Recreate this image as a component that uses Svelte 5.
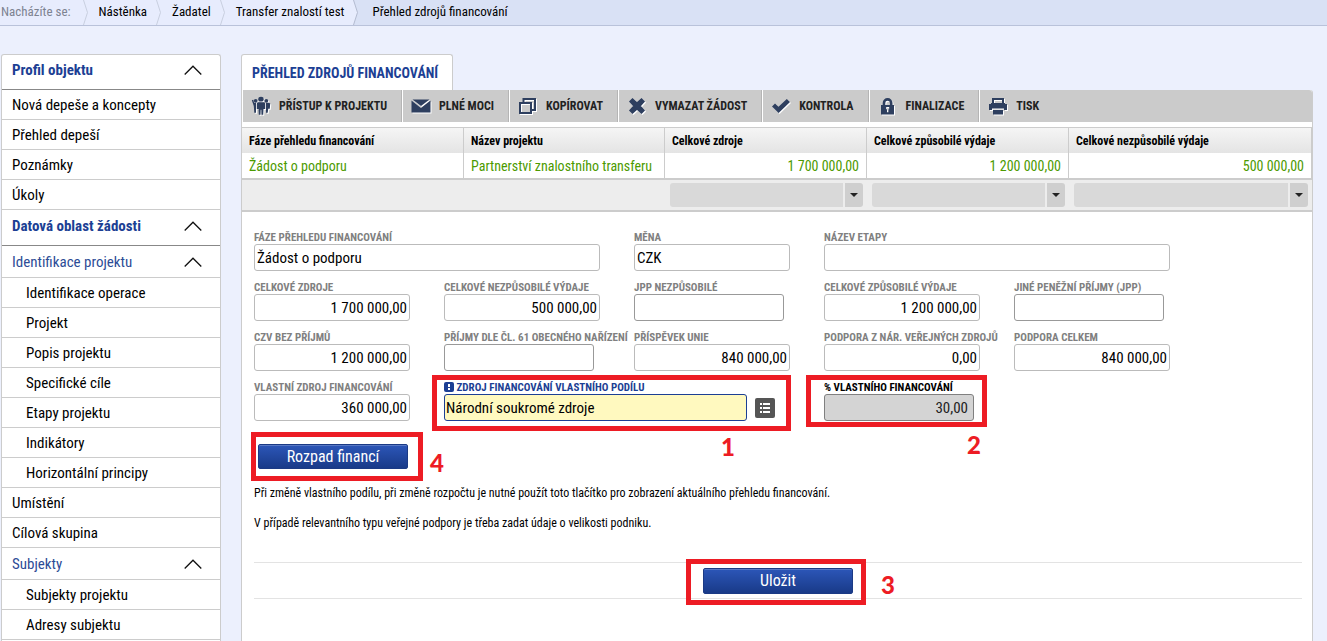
<script lang="ts">
  type Field = {
    id: string;
    label: string;
    value: string;
    span?: number;
    size: 'full' | 'short' | 'lookup';
    numeric?: boolean;
    kind?: 'required' | 'computed';
    mark?: 'share' | 'percent';
  };

  const crumbs = ['Nástěnka', 'Žadatel', 'Transfer znalostí test'];

  const menu = [
    { text: 'Profil objektu', type: 'head' },
    { text: 'Nová depeše a koncepty', type: 'item' },
    { text: 'Přehled depeší', type: 'item' },
    { text: 'Poznámky', type: 'item' },
    { text: 'Úkoly', type: 'item' },
    { text: 'Datová oblast žádosti', type: 'head' },
    { text: 'Identifikace projektu', type: 'group' },
    { text: 'Identifikace operace', type: 'sub' },
    { text: 'Projekt', type: 'sub' },
    { text: 'Popis projektu', type: 'sub' },
    { text: 'Specifické cíle', type: 'sub' },
    { text: 'Etapy projektu', type: 'sub' },
    { text: 'Indikátory', type: 'sub' },
    { text: 'Horizontální principy', type: 'sub' },
    { text: 'Umístění', type: 'item' },
    { text: 'Cílová skupina', type: 'item' },
    { text: 'Subjekty', type: 'group' },
    { text: 'Subjekty projektu', type: 'sub' },
    { text: 'Adresy subjektu', type: 'sub' }
  ];

  const tools = [
    { text: 'PŘÍSTUP K PROJEKTU', icon: 'people' },
    { text: 'PLNÉ MOCI', icon: 'mail' },
    { text: 'KOPÍROVAT', icon: 'copy' },
    { text: 'VYMAZAT ŽÁDOST', icon: 'cross' },
    { text: 'KONTROLA', icon: 'check' },
    { text: 'FINALIZACE', icon: 'lock' },
    { text: 'TISK', icon: 'print' }
  ];

  const columns = [
    { title: 'Fáze přehledu financování', value: 'Žádost o podporu', num: false },
    { title: 'Název projektu', value: 'Partnerství znalostního transferu', num: false },
    { title: 'Celkové zdroje', value: '1 700 000,00', num: true },
    { title: 'Celkové způsobilé výdaje', value: '1 200 000,00', num: true },
    { title: 'Celkové nezpůsobilé výdaje', value: '500 000,00', num: true }
  ];

  const fields: Field[] = [
    { id: 'faze', label: 'FÁZE PŘEHLEDU FINANCOVÁNÍ', value: 'Žádost o podporu', span: 2, size: 'full' },
    { id: 'mena', label: 'MĚNA', value: 'CZK', size: 'full' },
    { id: 'etapa', label: 'NÁZEV ETAPY', value: '', span: 2, size: 'full' },
    { id: 'zdroje', label: 'CELKOVÉ ZDROJE', value: '1 700 000,00', size: 'full', numeric: true },
    { id: 'nezpusobile', label: 'CELKOVÉ NEZPŮSOBILÉ VÝDAJE', value: '500 000,00', size: 'full', numeric: true },
    { id: 'jpp-nezp', label: 'JPP NEZPŮSOBILÉ', value: '', size: 'short', numeric: true },
    { id: 'zpusobile', label: 'CELKOVÉ ZPŮSOBILÉ VÝDAJE', value: '1 200 000,00', size: 'full', numeric: true },
    { id: 'jpp', label: 'JINÉ PENĚŽNÍ PŘÍJMY (JPP)', value: '', size: 'short', numeric: true },
    { id: 'czv', label: 'CZV BEZ PŘÍJMŮ', value: '1 200 000,00', size: 'full', numeric: true },
    { id: 'cl61', label: 'PŘÍJMY DLE ČL. 61 OBECNÉHO NAŘÍZENÍ', value: '', size: 'short', numeric: true },
    { id: 'unie', label: 'PŘÍSPĚVEK UNIE', value: '840 000,00', size: 'full', numeric: true },
    { id: 'narodni', label: 'PODPORA Z NÁR. VEŘEJNÝCH ZDROJŮ', value: '0,00', size: 'full', numeric: true },
    { id: 'podpora', label: 'PODPORA CELKEM', value: '840 000,00', size: 'full', numeric: true },
    { id: 'vlastni', label: 'VLASTNÍ ZDROJ FINANCOVÁNÍ', value: '360 000,00', size: 'full', numeric: true },
    { id: 'podil', label: 'ZDROJ FINANCOVÁNÍ VLASTNÍHO PODÍLU', value: 'Národní soukromé zdroje', span: 2, size: 'lookup', kind: 'required', mark: 'share' },
    { id: 'procento', label: '% VLASTNÍHO FINANCOVÁNÍ', value: '30,00', size: 'short', numeric: true, kind: 'computed', mark: 'percent' }
  ];
</script>

{#snippet toolIcon(name: string)}
  <svg class="tool-icon" width="20" height="20" viewBox="0 0 20 20" aria-hidden="true">
    {#if name === 'people'}
      <ellipse cx="10" cy="3.200" rx="2.700" ry="2.400" />
      <circle cx="4.700" cy="4.800" r="1.900" />
      <circle cx="15.300" cy="4.800" r="1.900" />
      <path d="M7 6.300h6q1.200.2 1.200 1.700v5h-1.700l-.3 5.800h-1.700l-.2-5h-.6l-.2 5H7.800L7.500 13H5.800V8q0-1.500 1.200-1.700z" />
      <path d="M.8 4.200l1.400-.4 1 3H5v10H3.300L2.800 10zM19.200 7.500l-1.500-.7H15v10h1.700l.5-4h1.600z" />
    {:else if name === 'mail'}
      <path d="M.5 4.500L10 12l9.500-7.500v12H.5z" />
      <path d="M1.500 3.500h17L10 10z" />
    {:else if name === 'copy'}
      <path d="M2 7h11v10H2z" fill="none" stroke="#2e3f5f" stroke-width="2" />
      <path d="M5.500 6V3h11.500v11H14" fill="none" stroke="#2e3f5f" stroke-width="2" />
    {:else if name === 'cross'}
      <path d="M3 5.500L5.500 3 10 7l4.500-4L17 5.500 13 10l4 4.500-2.500 2.500L10 13l-4.500 4L3 14.500 7 10z" stroke="#2e3f5f" stroke-width="1.500" />
    {:else if name === 'check'}
      <path d="M1 10.500l3-3 3.500 3.200L15.800 3 19 6 7.600 17z" />
    {:else if name === 'lock'}
      <path d="M6 9.500V7a3.600 3.600 0 0 1 7.200 0v2.500" fill="none" stroke="#2e3f5f" stroke-width="2.600" />
      <path fill-rule="evenodd" d="M3 9h13v9.500H3zM8.200 11v2.300H9v3h1.500v-3h.7V11z" />
    {:else}
      <path d="M5 8V3h10v5" fill="none" stroke="#2e3f5f" stroke-width="2" />
      <path d="M1 8h2V7h14v1h2v6h-3v-1.500H4V14H1zM5 14h10v4.500H5z" />
    {/if}
  </svg>
{/snippet}

{#snippet chevron()}
  <svg class="chevron" width="18" height="10" viewBox="0 0 18 10" aria-hidden="true">
    <path d="M.7 9.500L9 1.200l8.300 8.300" fill="none" stroke="#111" stroke-width="1.300" />
  </svg>
{/snippet}

<div class="page">
  <nav class="crumbs" aria-label="Drobečková navigace">
    <span class="here">Nacházíte se:</span>
    {#each crumbs as crumb}
      <svg class="sep" width="5" height="25" viewBox="0 0 5 25" aria-hidden="true">
        <path d="M.5 0l4 12.500-4 12.500" fill="none" stroke="#c9cfdf" />
      </svg>
      <a href="#crumb">{crumb}</a>
    {/each}
    <span class="current">
      <svg class="sep" width="5" height="25" viewBox="0 0 5 25" aria-hidden="true">
        <path d="M0 0h.5l4 12.500-4 12.500H0z" fill="#e7ecfd" />
        <path d="M.5 0l4 12.500-4 12.500" fill="none" stroke="#b3bbd0" />
      </svg>
      <a href="#current">Přehled zdrojů financování</a>
    </span>
  </nav>

  <div class="body">
    <aside class="sidebar">
      {#each menu as entry}
        <a class="entry {entry.type}" href="#menu">
          <span>{entry.text}</span>
          {#if entry.type === 'head' || entry.type === 'group'}
            {@render chevron()}
          {/if}
        </a>
      {/each}
    </aside>

    <main>
      <h1>PŘEHLED ZDROJŮ FINANCOVÁNÍ</h1>

      <div class="panel">
        <div class="toolbar">
          {#each tools as tool}
            <button type="button">
              {@render toolIcon(tool.icon)}
              {tool.text}
            </button>
          {/each}
        </div>

        <table>
          <thead>
            <tr>
              {#each columns as col}
                <th>{col.title}</th>
              {/each}
            </tr>
          </thead>
          <tbody>
            <tr>
              {#each columns as col}
                <td class:num={col.num}>{col.value}</td>
              {/each}
            </tr>
          </tbody>
          <tfoot>
            <tr>
              {#each columns as col}
                <td>
                  {#if col.num}
                    <div class="filter">
                      <select aria-label={col.title}><option></option></select>
                      <svg width="8" height="4" viewBox="0 0 8 4" aria-hidden="true"><path d="M0 0h8L4 4z" fill="#222" /></svg>
                    </div>
                  {/if}
                </td>
              {/each}
            </tr>
          </tfoot>
        </table>

        <form onsubmit={(e) => e.preventDefault()}>
          <div class="fields">
            {#each fields as f}
              <div class="field {f.kind ?? ''}" class:wide={f.span === 2}>
                <label for={f.id}>
                  {#if f.kind === 'required'}<svg class="bang" width="10" height="10" viewBox="0 0 10 10" aria-hidden="true"><rect width="10" height="10" rx="2" fill="#1c3f94" /><path d="M4 2h2v3H4zM4 6h2v2H4z" fill="#fff" /></svg>{/if}
                  {f.label}
                </label>
                <div class="control">
                  <input id={f.id} type="text" class={f.size} class:numeric={f.numeric} value={f.value} readonly={f.kind === 'computed'} />
                  {#if f.size === 'lookup'}
                    <button type="button" class="lookup-btn" aria-label="Vybrat ze seznamu">
                      <svg width="12" height="12" viewBox="0 0 12 12" aria-hidden="true">
                        <path d="M1 1h2v2H1zM4 1h7v2H4zM1 5h2v2H1zM4 5h7v2H4zM1 9h2v2H1zM4 9h7v2H4z" fill="#fff" />
                      </svg>
                    </button>
                  {/if}
                </div>
                {#if f.mark}
                  <div class="mark {f.mark}"><b>{f.mark === 'share' ? 1 : 2}</b></div>
                {/if}
              </div>
            {/each}
          </div>

          <div class="split">
            <button type="button" class="primary">Rozpad financí</button>
            <div class="mark breakdown"><b>4</b></div>
          </div>

          <p>Při změně vlastního podílu, při změně rozpočtu je nutné použít toto tlačítko pro zobrazení aktuálního přehledu financování.</p>
          <p>V případě relevantního typu veřejné podpory je třeba zadat údaje o velikosti podniku.</p>

          <div class="actions">
            <div class="save">
              <button type="submit" class="primary">Uložit</button>
              <div class="mark submit"><b>3</b></div>
            </div>
          </div>
        </form>
      </div>
    </main>
  </div>
</div>

<style>
  :global(body) {
    margin: 0;
    overflow: hidden;
    background: #ecf0fd;
  }
  .page {
    display: flex;
    flex-direction: column;
    min-height: 100vh;
    font-family: 'Roboto Condensed', 'Liberation Sans Narrow', Roboto, sans-serif;
    font-size: 15px;
    color: #000;
  }
  .page * { box-sizing: border-box; }
  a { color: inherit; text-decoration: none; }
  button, input, select { font-family: inherit; }

  .crumbs {
    display: flex;
    height: 26px;
    border-bottom: 1px solid #b9c2da;
    background: #e7ecfd;
    font-size: 13px;
    line-height: 24px;
    white-space: nowrap;
  }
  .here { padding: 0 3px 0 1px; color: #7d8391; }
  .sep { display: block; flex-shrink: 0; margin: 0 11px 0 9px; }
  .current {
    display: flex;
    flex: 1;
    margin-left: 9px;
    background: #d9e1f5;
  }
  .current .sep { margin: 0 14px 0 0; }

  .body {
    display: flex;
    flex: 1;
    gap: 20px;
    padding: 28px 14px 0 1px;
  }

  .sidebar {
    flex: 0 0 220px;
    border: 1px solid #ccc;
    border-bottom: 0;
    border-radius: 3px 3px 0 0;
    background: #fff;
  }
  .entry {
    display: flex;
    align-items: center;
    justify-content: space-between;
    height: 30px;
    padding: 0 18px 0 10px;
    border-bottom: 1px solid #ccc;
  }
  .sub { padding-left: 24px; }
  .head {
    height: 36px;
    padding-bottom: 4px;
    border-bottom-color: #888;
    color: #1c3f94;
    font-weight: 700;
  }
  .head:first-child { height: 35px; }
  .group { height: 32px; color: #2d4c96; }
  .chevron { display: block; }

  main { flex: 1; min-width: 0; display: flex; flex-direction: column; }
  h1 {
    align-self: flex-start;
    height: 36px;
    margin: 0;
    padding: 0 14px 0 10px;
    border: 1px solid #ccc;
    border-bottom: 0;
    border-radius: 3px 3px 0 0;
    background: #fff;
    color: #1c3f94;
    font-size: 14px;
    line-height: 36px;
  }
  .panel {
    flex: 1;
    border: 1px solid #ccc;
    border-width: 0 1px;
    border-radius: 0 3px 0 0;
    background: #fff;
  }
  .toolbar {
    display: flex;
    height: 32px;
    margin-bottom: 5px;
    border-radius: 0 3px 0 0;
    background: #cbcbcb;
  }
  .toolbar button {
    display: flex;
    align-items: center;
    gap: 8px;
    padding: 0 14px 0 8px;
    border: 0;
    border-left: 1px solid #fff;
    border-right: 1px solid #b5b5b5;
    background: none;
    color: #222;
    font-size: 12px;
    font-weight: 700;
    white-space: nowrap;
  }
  .toolbar button:last-child { border-right: 0; }
  .tool-icon { fill: #2e3f5f; filter: drop-shadow(1px 1px 0 #fff); }

  table {
    width: 100%;
    border-collapse: separate;
    border-spacing: 0;
    table-layout: fixed;
    border-top: 1px solid #ccc;
  }
  th:nth-child(1) { width: 222px; }
  th:nth-child(2) { width: 201px; }
  th:nth-child(3), th:nth-child(4) { width: 202px; }
  th, td { padding: 0 7px; border-right: 1px solid #ccc; text-align: left; white-space: nowrap; }
  th {
    height: 25px;
    background: linear-gradient(#f5f5f5, #e4e4e4);
    font-size: 12px;
  }
  tbody td { height: 27px; border-bottom: 2px solid #ccc; color: #4c9a00; font-size: 14px; }
  tbody .num { text-align: right; }
  tfoot td {
    height: 32px;
    padding: 0 4px 0 5px;
    border-right: 0;
    border-bottom: 2px solid #ccc;
    background: #ededed;
  }
  .filter { position: relative; }
  .filter select {
    display: block;
    width: 100%;
    height: 24px;
    border: 0;
    border-radius: 3px;
    appearance: none;
    background: linear-gradient(to left, #cfcfcf 18px, #ededed 18px, #ededed 20px, #d9d9d9 20px);
  }
  .filter svg { position: absolute; top: 10px; right: 5px; pointer-events: none; }

  form { padding: 18px 10px 20px 12px; }
  .fields {
    display: grid;
    grid-template-columns: repeat(5, 190px);
    row-gap: 9px;
  }
  .field { position: relative; }
  .wide { grid-column: span 2; }
  label {
    display: block;
    height: 14px;
    color: #808080;
    font-size: 11px;
    font-weight: 700;
    line-height: 16px;
    white-space: nowrap;
  }
  .required label { color: #1c3f94; }
  .computed label { color: #000; }
  .bang { vertical-align: -1px; }
  .control { display: flex; align-items: center; gap: 8px; }
  input {
    width: calc(100% - 34px);
    height: 27px;
    padding: 0 2px;
    border: 1px solid #bbb;
    border-radius: 3px;
    background: #fff;
    color: #000;
    font-size: 15px;
  }
  .numeric { text-align: right; }
  .short { width: 150px; border-color: #999; }
  .lookup { width: 303px; }
  .required input { padding: 0 1px; border-color: #1c3f94; background: #fff9bf; }
  .computed input { padding-right: 5px; border-color: #808080; background: #d4d4d4; color: #222; }
  .lookup-btn {
    display: flex;
    align-items: center;
    justify-content: center;
    width: 20px;
    height: 20px;
    padding: 0;
    border: 0;
    border-radius: 2px;
    background: #555;
  }

  .primary {
    width: 150px;
    height: 25px;
    padding: 0;
    border: 1px solid #1b3a85;
    border-radius: 2px;
    background: linear-gradient(#2c56b8, #193a88);
    box-shadow: inset 0 1px 0 #5878c4;
    color: #fff;
    font-size: 16px;
    line-height: 24px;
  }
  .split { position: relative; width: 160px; margin: 23px 0 16px 4px; }
  p { margin: 0 0 14px; font-size: 12px; line-height: 16px; }
  .actions {
    display: flex;
    justify-content: center;
    margin-top: 31px;
    padding: 5px 0 4px;
    border: 1px solid #e3e3e3;
    border-width: 1px 0;
  }
  .save { position: relative; }
  .save .primary { display: block; height: 26px; }

  /* numbered highlights over the form */
  .mark {
    position: absolute;
    border: 5px solid #ed1c24;
    color: #ed1c24;
    pointer-events: none;
  }
  .mark b {
    position: absolute;
    font: 900 24px/24px Lato, sans-serif;
  }
  .share { top: -5px; left: -12px; width: 359px; height: 56px; }
  .share b { top: 55px; left: 284px; }
  .percent { top: -5px; left: -18px; width: 181px; height: 52px; }
  .percent b { top: 53px; left: 156px; }
  .breakdown { top: -12px; left: -7px; width: 172px; height: 49px; }
  .breakdown b { top: 14px; left: 174px; }
  .submit { top: -9px; left: -17px; width: 180px; height: 46px; }
  .submit b { top: 9px; left: 190px; }
</style>
